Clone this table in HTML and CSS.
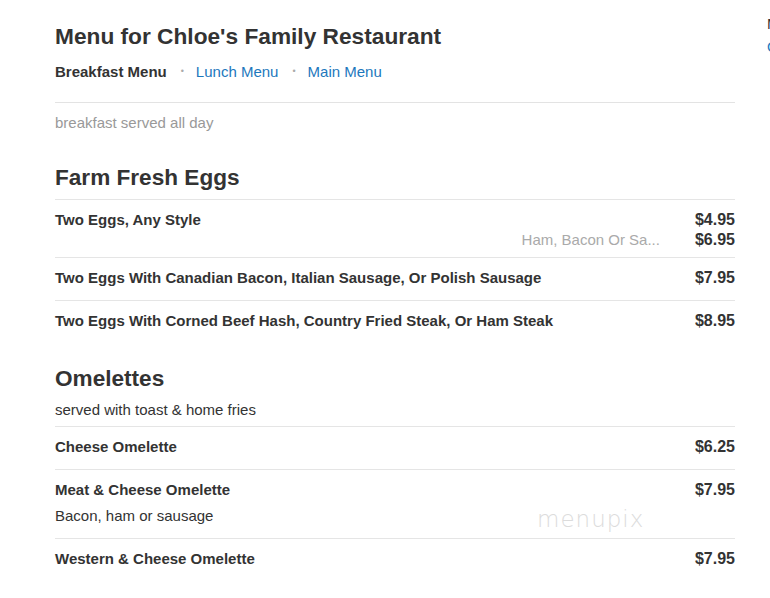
FILE: index.html
```html
<!DOCTYPE html>
<html>
<head>
<meta charset="utf-8">
<link rel="stylesheet" href="styles.css">
</head>
<body>
<div class="page">
  <main class="menu">
    <h1 class="title">Menu for Chloe's Family Restaurant</h1>
    <nav class="tabs">
      <span class="tab current">Breakfast Menu</span>
      <span class="sep">•</span>
      <a class="tab" href="#">Lunch Menu</a>
      <span class="sep">•</span>
      <a class="tab" href="#">Main Menu</a>
    </nav>
    <p class="note">breakfast served all day</p>

    <section class="section">
      <h2 class="section-title">Farm Fresh Eggs</h2>
      <div class="item item-first">
        <div class="line"><span class="name">Two Eggs, Any Style</span><span class="price">$4.95</span></div>
        <div class="line line-sub"><span class="option">Ham, Bacon Or Sa...</span><span class="price">$6.95</span></div>
      </div>
      <div class="item">
        <div class="line"><span class="name">Two Eggs With Canadian Bacon, Italian Sausage, Or Polish Sausage</span><span class="price">$7.95</span></div>
      </div>
      <div class="item item-last">
        <div class="line"><span class="name">Two Eggs With Corned Beef Hash, Country Fried Steak, Or Ham Steak</span><span class="price">$8.95</span></div>
      </div>
    </section>

    <section class="section section-omelettes">
      <h2 class="section-title with-desc">Omelettes</h2>
      <p class="section-desc">served with toast &amp; home fries</p>
      <div class="item">
        <div class="line"><span class="name">Cheese Omelette</span><span class="price">$6.25</span></div>
      </div>
      <div class="item item-desc">
        <div class="line"><span class="name">Meat &amp; Cheese Omelette</span><span class="price">$7.95</span></div>
        <p class="item-text">Bacon, ham or sausage</p>
        <span class="watermark">menupix</span>
      </div>
      <div class="item item-last">
        <div class="line"><span class="name">Western &amp; Cheese Omelette</span><span class="price">$7.95</span></div>
      </div>
    </section>
  </main>
  <aside class="side">
    <div class="side-dark">Menu</div>
    <div class="side-link">Order</div>
  </aside>
</div>
</body>
</html>
```
FILE: styles.css
```css
html, body {
  margin: 0;
  padding: 0;
  background: #fff;
  overflow: hidden;
}
body {
  font-family: "Liberation Sans", Arial, sans-serif;
  color: #333;
  width: 770px;
  height: 598px;
}
.page {
  display: flex;
  gap: 32px;
  padding: 0 0 0 55px;
}
.menu {
  width: 680px;
  flex: none;
}
.title {
  margin: 0;
  padding-top: 22px;
  font-size: 22.7px;
  line-height: 28px;
  font-weight: bold;
  color: #333;
}
.tabs {
  display: flex;
  align-items: center;
  margin-top: 10px;
  height: 22px;
  font-size: 15px;
  padding-bottom: 20px;
  border-bottom: 1px solid #e3e3e3;
}
.tab {
  color: #1d78bd;
  text-decoration: none;
}
.tab.current {
  color: #333;
  font-weight: bold;
}
.sep {
  color: #aaa;
  font-size: 9px;
  margin: 0 12px 0 14px;
}
.note {
  margin: 0;
  padding-top: 10px;
  font-size: 15px;
  line-height: 20px;
  color: #999;
}
.section {
  margin-top: 31px;
}
.section-title {
  margin: 0;
  font-size: 22.6px;
  line-height: 28px;
  font-weight: bold;
  color: #333;
  padding-bottom: 7px;
  border-bottom: 1px solid #e5e5e5;
}
.section-title.with-desc {
  border-bottom: none;
  padding-bottom: 0;
}
.section-desc {
  margin: 0;
  padding: 7px 0 6px;
  font-size: 15px;
  line-height: 20px;
  color: #333;
  border-bottom: 1px solid #e5e5e5;
}
.section-omelettes {
  margin-top: 22px;
}
.item {
  position: relative;
  padding: 10px 0 12px;
  border-bottom: 1px solid #e5e5e5;
}
.item-first {
  padding-bottom: 7px;
}
.item-last {
  border-bottom: none;
}
.item-desc {
  padding-bottom: 12px;
}
.line {
  display: flex;
  justify-content: space-between;
  align-items: baseline;
  line-height: 20px;
}
.line-sub {
  justify-content: flex-end;
}
.name {
  font-size: 15px;
  font-weight: bold;
  color: #333;
}
.price {
  font-size: 16px;
  font-weight: bold;
  color: #333;
  text-align: right;
}
.option {
  font-size: 15px;
  color: #aaa;
  margin-right: 35px;
}
.item-text {
  margin: 6px 0 0;
  font-size: 15px;
  line-height: 20px;
  color: #333;
}
.watermark {
  position: absolute;
  left: 482px;
  top: 36px;
  font-family: "DejaVu Sans", sans-serif;
  font-weight: 200;
  font-size: 23px;
  letter-spacing: 1px;
  color: #dcdcdc;
}
.side {
  flex: none;
  width: 120px;
  padding-top: 14px;
  font-size: 15px;
}
.side-dark {
  color: #333;
  line-height: 20px;
}
.side-link {
  color: #1d78bd;
  line-height: 20px;
  margin-top: 3px;
}
```
